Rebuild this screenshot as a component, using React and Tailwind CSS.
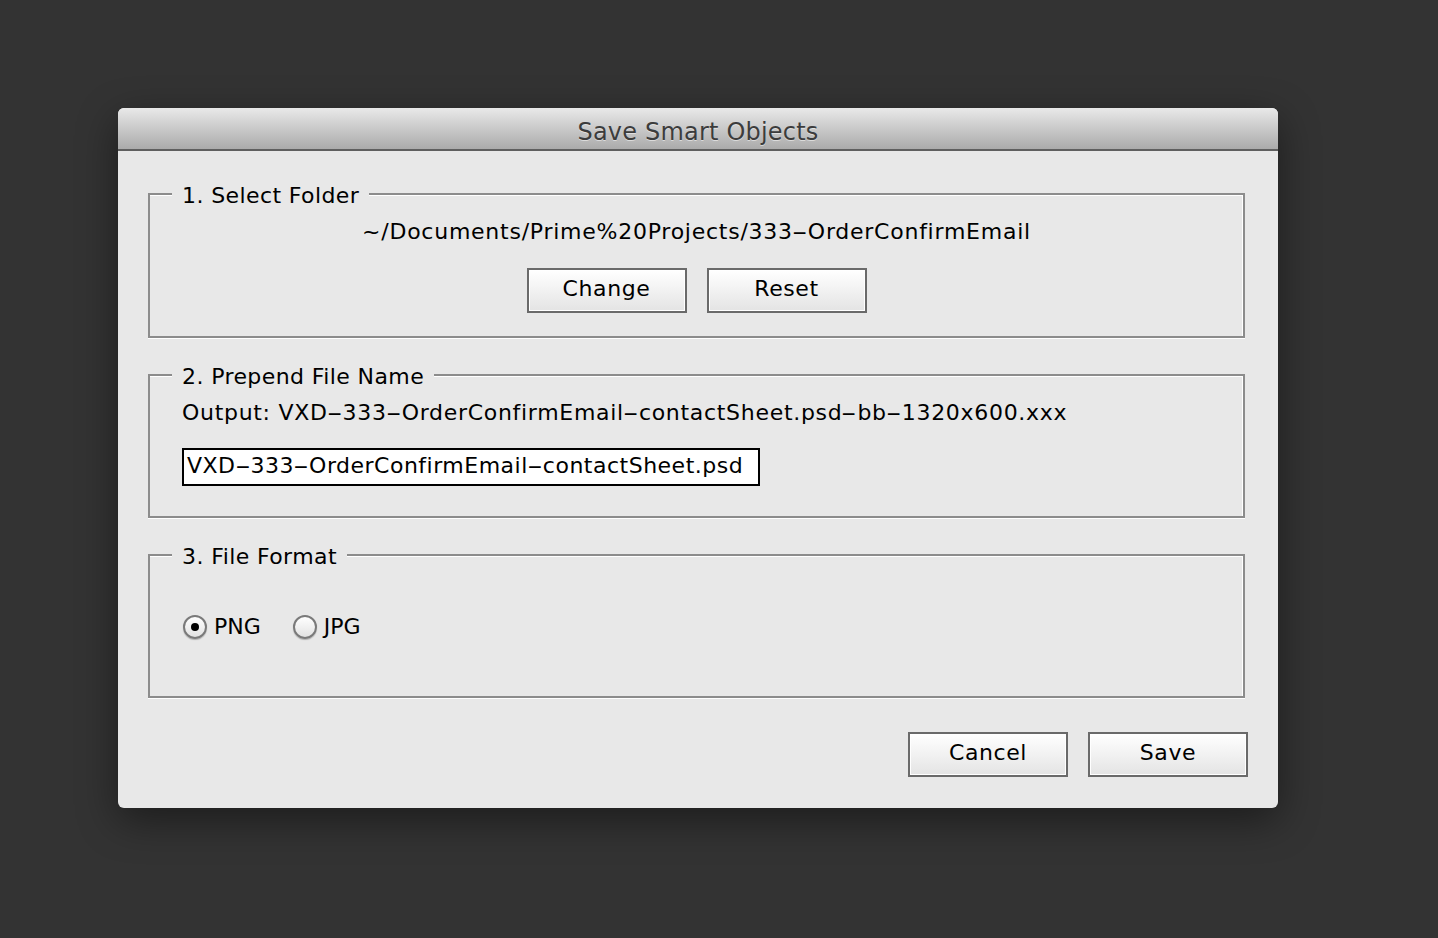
const font = { fontFamily: '"DejaVu Sans", "Liberation Sans", sans-serif' };

// Lucida-style hyphens are long; widen DejaVu's short hyphen to match
const Dashed = ({ text }) =>
  text.split("-").map((part, i) => (
    <span key={i}>
      {i > 0 && <span className="inline-block w-[15px] text-center scale-x-[2]">-</span>}
      {part}
    </span>
  ));

const Button = ({ children }) => (
  <button className="w-[160px] h-[45px] pb-[3px] border-2 border-[#6a6a6a] bg-gradient-to-b from-white to-[#e4e4e4] shadow-[inset_0_0_0_1px_#ffffff] text-[22px] leading-none tracking-[0.6px] text-black">
    {children}
  </button>
);

const Group = ({ legend, className, children }) => (
  <div
    className={
      "relative mr-[3px] border-2 border-[#8c8c8c] shadow-[inset_0_1px_0_#ffffff,inset_-1px_0_0_#ffffff,0_1px_0_#ffffff] " +
      className
    }
  >
    <span className="absolute left-[22px] top-[-12px] px-[10px] bg-[#e8e8e8] text-[22px] leading-[26px] tracking-[0.4px] text-black">
      {legend}
    </span>
    {children}
  </div>
);

const Radio = ({ checked, label }) => (
  <label className="flex items-center gap-[7px]">
    <span className="w-[24px] h-[24px] rounded-full border-2 border-[#7a7a7a] bg-gradient-to-b from-white to-[#e2e2e2] shadow-[0_1px_1px_rgba(0,0,0,0.25)] flex items-center justify-center">
      {checked && <span className="w-[8px] h-[8px] rounded-full bg-black" />}
    </span>
    <span className="text-[22px] leading-[26px] text-black">{label}</span>
  </label>
);

export default function App() {
  return (
    <div className="min-h-screen bg-[#333333] pt-[108px] pl-[118px]" style={font}>
      <div className="w-[1160px] h-[700px] rounded-[6px] bg-[#e8e8e8] shadow-[0_12px_40px_rgba(0,0,0,0.45)] overflow-hidden">
        {/* Title bar */}
        <div className="h-[43px] border-b-2 border-[#5f5f5f] bg-gradient-to-b from-[#e9e9e9] to-[#ababab] flex items-center justify-center pt-[6px]">
          <span className="text-[24px] tracking-[0.2px] text-[#3c3c3c] [text-shadow:0_1px_0_rgba(255,255,255,0.5)]">
            Save Smart Objects
          </span>
        </div>

        <div className="pl-[30px] pr-[30px]">
          {/* 1. Select Folder */}
          <Group legend="1. Select Folder" className="mt-[42px] pt-[24px] pb-[23px]">
            <div className="text-center text-[22px] leading-[26px] tracking-[0.75px] text-black">
              <Dashed text="~/Documents/Prime%20Projects/333-OrderConfirmEmail" />
            </div>
            <div className="mt-[23px] flex justify-center gap-[20px]">
              <Button>Change</Button>
              <Button>Reset</Button>
            </div>
          </Group>

          {/* 2. Prepend File Name */}
          <Group legend="2. Prepend File Name" className="mt-[36px] pt-[24px] pb-[30px] pl-[32px]">
            <div className="text-[22px] leading-[26px] tracking-[0.7px] text-black">
              Output: <Dashed text="VXD-333-OrderConfirmEmail-contactSheet.psd-bb-1320x600.xxx" />
            </div>
            <div className="mt-[22px] w-[578px] h-[38px] pb-[4px] border-2 border-black bg-white flex items-center pl-[3px] text-[22px] tracking-[0.5px] text-black whitespace-nowrap">
              <Dashed text="VXD-333-OrderConfirmEmail-contactSheet.psd" />
            </div>
          </Group>

          {/* 3. File Format */}
          <Group legend="3. File Format" className="mt-[36px] pt-[58px] pb-[56px] pl-[33px]">
            <div className="flex items-center gap-[32px]">
              <Radio checked label="PNG" />
              <Radio label="JPG" />
            </div>
          </Group>

          <div className="mt-[34px] flex justify-end gap-[20px]">
            <Button>Cancel</Button>
            <Button>Save</Button>
          </div>
        </div>
      </div>
    </div>
  );
}
